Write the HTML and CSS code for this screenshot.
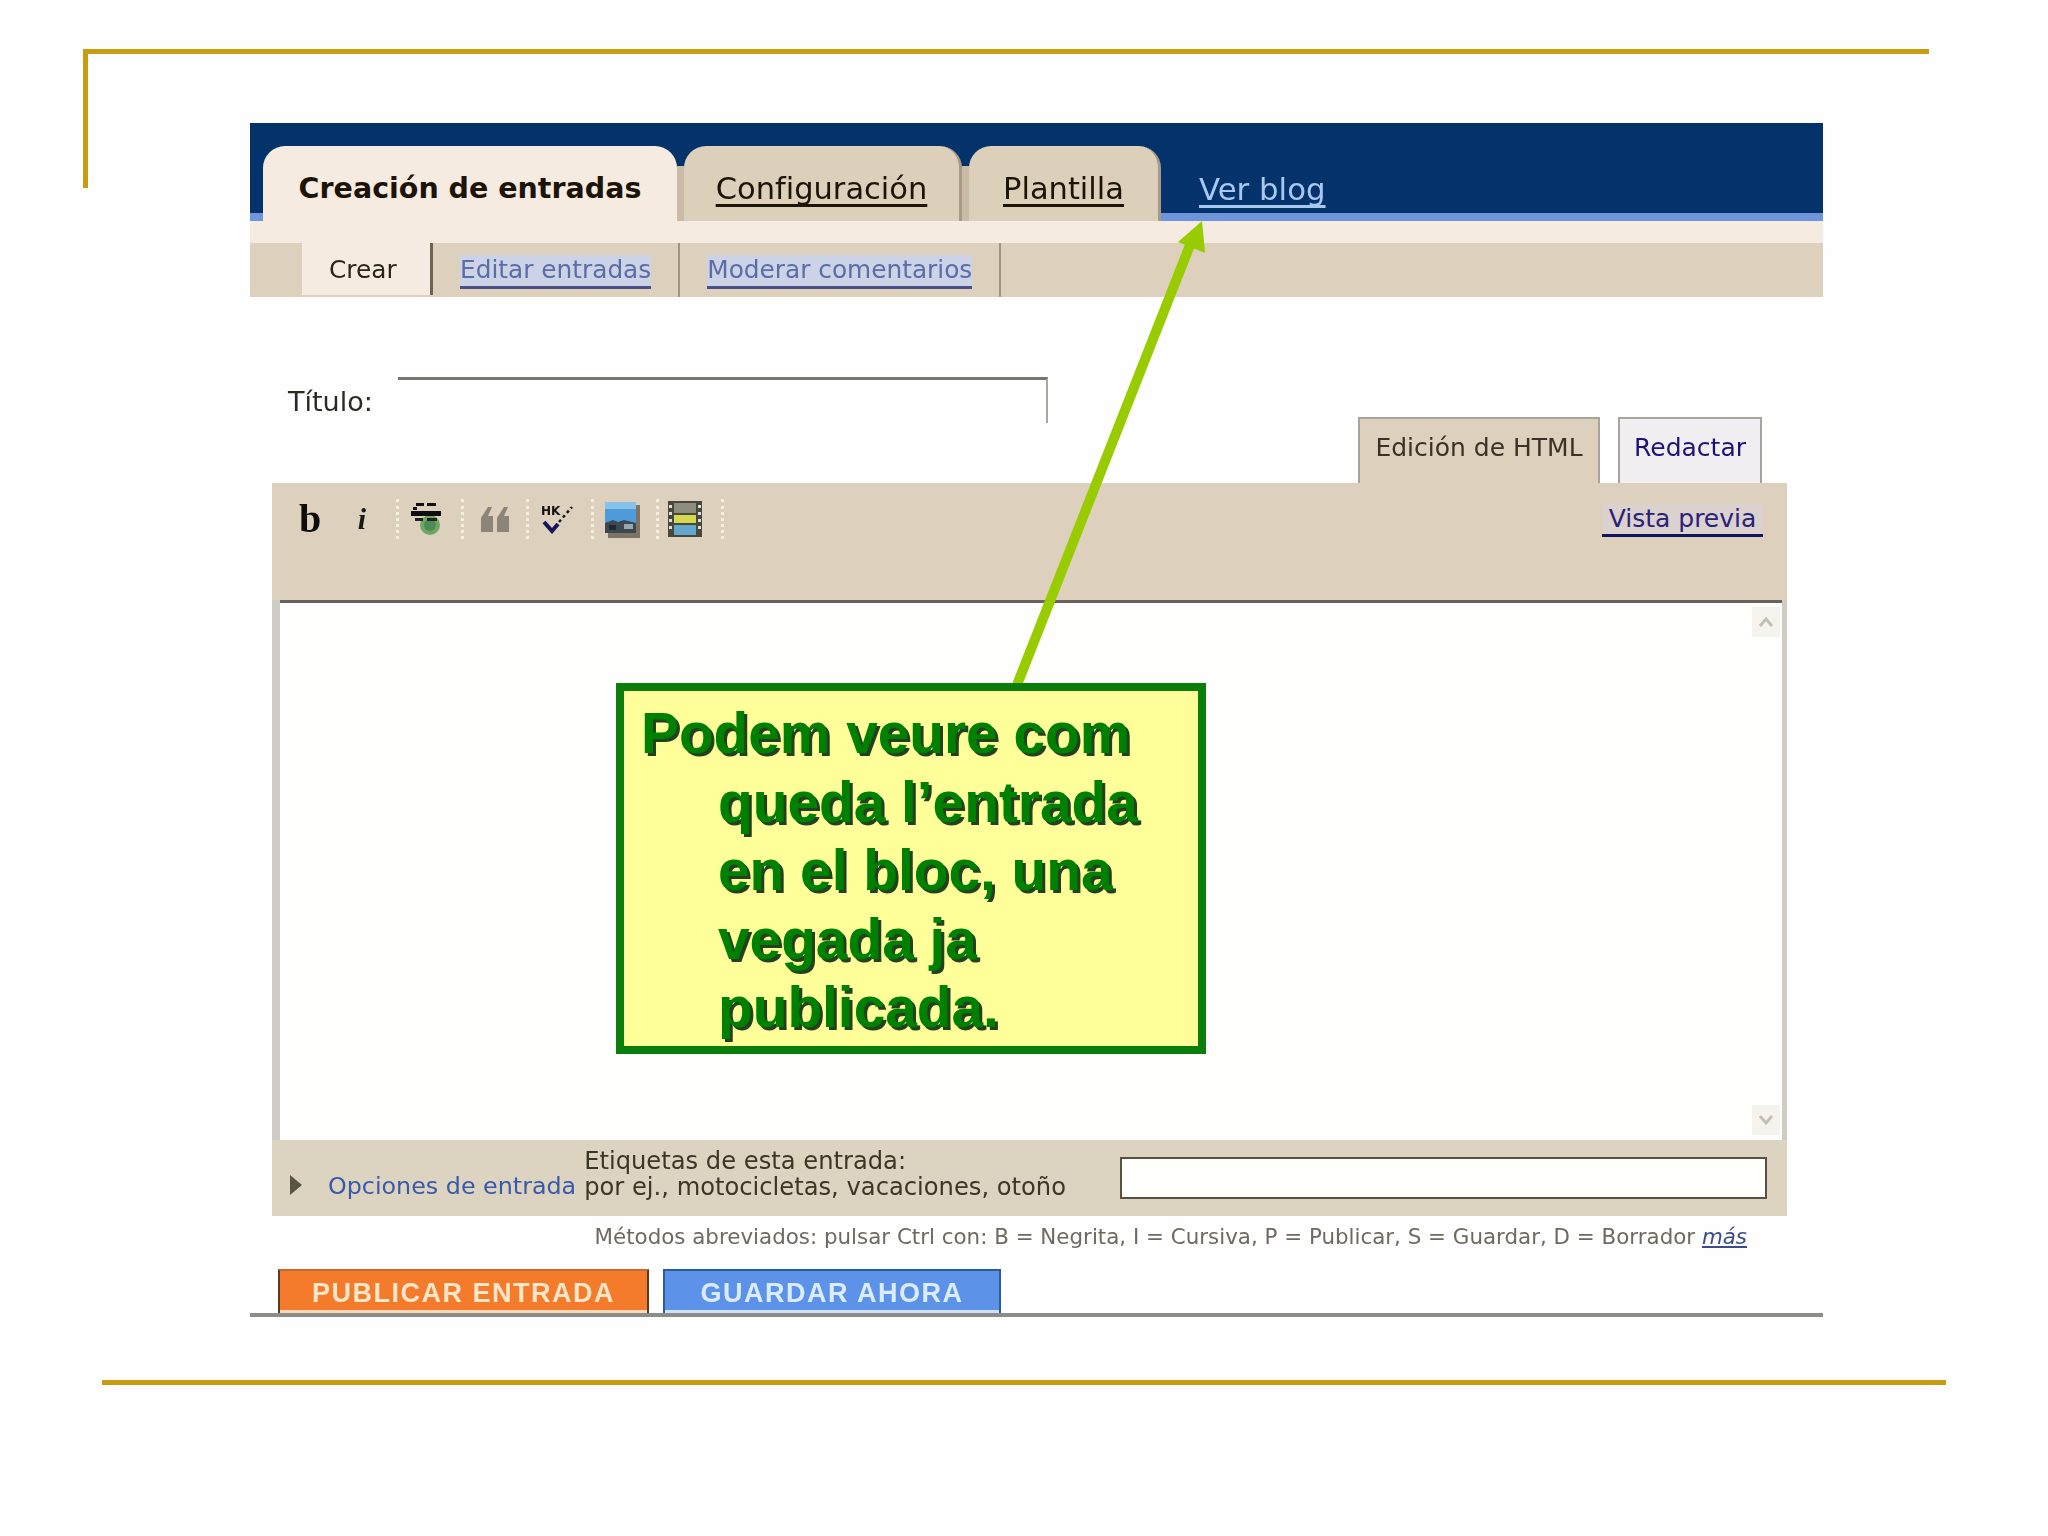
FILE: index.html
```html
<!DOCTYPE html>
<html lang="es">
<head>
    <meta charset="UTF-8">
    <title>Creación de entradas</title>
    <link rel="stylesheet" href="styles.css">
</head>
<body>
    <div class="slide">
        <div class="corner-rule"></div>

        <div class="shot">
            <!-- Top tabs -->
            <div class="top-nav">
                <a class="top-tab active">Creación de entradas</a>
                <a class="top-tab">Configuración</a>
                <a class="top-tab">Plantilla</a>
                <a class="top-link">Ver blog</a>
            </div>
            <div class="cream-strip"></div>
            <div class="sub-nav">
                <a class="sub-tab active">Crear</a>
                <a class="sub-tab"><span class="sub-link">Editar entradas</span></a>
                <a class="sub-tab"><span class="sub-link">Moderar comentarios</span></a>
            </div>

            <!-- Title and editor tabs -->
            <div class="form-head">
                <div class="title-row">
                    <label class="title-label">Título:</label>
                    <div class="title-input"></div>
                </div>
                <div class="mode-tabs">
                    <div class="mode-tab active">Edición de HTML</div>
                    <div class="mode-tab">Redactar</div>
                </div>
            </div>

            <!-- Editor -->
            <div class="editor">
                <div class="toolbar">
                    <div class="tool-group">
                        <span class="tool tool-b">b</span>
                        <span class="tool tool-i">i</span>
                        <span class="tool-sep"></span>
                        <span class="tool">
                            <svg width="36" height="34" viewBox="0 0 36 34">
                                <circle cx="21" cy="23" r="10" fill="#6ea664"/>
                                <circle cx="21" cy="23" r="6" fill="#4f8a50"/>
                                <rect x="7" y="1" width="8" height="3" fill="#111"/>
                                <rect x="18" y="1" width="9" height="3" fill="#111"/>
                                <rect x="4" y="5" width="4" height="3" fill="#111"/>
                                <rect x="2" y="9" width="30" height="5" fill="#0c0c0c"/>
                                <rect x="6" y="16" width="8" height="3" fill="#222"/>
                                <rect x="18" y="16" width="10" height="3" fill="#222"/>
                            </svg>
                        </span>
                        <span class="tool-sep"></span>
                        <span class="tool tool-quote">
                            <svg width="30" height="26" viewBox="0 0 30 26">
                                <path d="M1 26V12L8 1h4L8 10h5v16zM17 26V12L24 1h4l-4 9h5v16z" fill="#8c8479"/>
                            </svg>
                        </span>
                        <span class="tool-sep"></span>
                        <span class="tool">
                            <svg width="34" height="30" viewBox="0 0 34 30">
                                <text x="1" y="11" class="spell-text">HK</text>
                                <path d="M4 18l8 9 6-7" fill="none" stroke="#14145a" stroke-width="4"/>
                                <path d="M19 18L32 3" fill="none" stroke="#1a1a1a" stroke-width="2.5" stroke-dasharray="3 3"/>
                            </svg>
                        </span>
                        <span class="tool-sep"></span>
                        <span class="tool">
                            <svg width="36" height="37" viewBox="0 0 36 37">
                                <rect x="4" y="4" width="32" height="33" fill="#7d7466"/>
                                <rect x="1" y="1" width="31" height="31" fill="#4f9ad8"/>
                                <rect x="1" y="1" width="31" height="7" fill="#86c2ea"/>
                                <path d="M1 32V22l8-3 5 2 6-2 12 3v10z" fill="#3c4750"/>
                                <rect x="20" y="23" width="9" height="5" fill="#9aa6ae"/>
                                <rect x="5" y="24" width="7" height="5" fill="#1f2a30"/>
                            </svg>
                        </span>
                        <span class="tool-sep"></span>
                        <span class="tool tool-film">
                            <svg width="34" height="36" viewBox="0 0 34 36">
                                <rect width="34" height="36" fill="#46483c"/>
                                <rect x="6" y="2" width="22" height="10" fill="#8e8e80"/>
                                <rect x="6" y="14" width="22" height="8" fill="#d8d84e"/>
                                <rect x="6" y="24" width="22" height="10" fill="#62a6cc"/>
                                <rect x="1" y="4" width="3" height="3" fill="#ddd"/>
                                <rect x="1" y="11" width="3" height="3" fill="#ddd"/>
                                <rect x="1" y="18" width="3" height="3" fill="#ddd"/>
                                <rect x="1" y="25" width="3" height="3" fill="#ddd"/>
                                <rect x="30" y="4" width="3" height="3" fill="#ddd"/>
                                <rect x="30" y="11" width="3" height="3" fill="#ddd"/>
                                <rect x="30" y="18" width="3" height="3" fill="#ddd"/>
                                <rect x="30" y="25" width="3" height="3" fill="#ddd"/>
                            </svg>
                        </span>
                        <span class="tool-sep"></span>
                    </div>
                    <a class="preview-link">Vista previa</a>
                </div>

                <div class="text-frame">
                    <div class="text-area">
                        <div class="scroll-col">
                            <div class="scroll-btn">
                                <svg width="16" height="12" viewBox="0 0 16 12"><path d="M2 10l6-7 6 7" fill="none" stroke="#c4c0b6" stroke-width="3"/></svg>
                            </div>
                            <div class="scroll-btn">
                                <svg width="16" height="12" viewBox="0 0 16 12"><path d="M2 2l6 7 6-7" fill="none" stroke="#c4c0b6" stroke-width="3"/></svg>
                            </div>
                        </div>
                    </div>
                </div>

                <div class="options-bar">
                    <span class="options-arrow"></span>
                    <a class="options-link">Opciones de entrada</a>
                    <div class="labels-hint">
                        <div>Etiquetas de esta entrada:</div>
                        <div>por ej., motocicletas, vacaciones, otoño</div>
                    </div>
                    <div class="labels-input"></div>
                </div>
            </div>

            <div class="shortcuts">Métodos abreviados: pulsar Ctrl con: B = Negrita, I = Cursiva, P = Publicar, S = Guardar, D = Borrador <a class="more-link">más</a></div>

            <div class="actions">
                <div class="btn btn-publish">PUBLICAR ENTRADA</div>
                <div class="btn btn-save">GUARDAR AHORA</div>
            </div>
        </div>

        <div class="bottom-rule"></div>

        <!-- Arrow and callout sit on top of the screenshot -->
        <svg class="arrow" width="2048" height="1536" viewBox="0 0 2048 1536">
            <line x1="1015" y1="690" x2="1192" y2="240" stroke="#99cc00" stroke-width="10"/>
            <polygon points="1202,221 1178,242 1205,253" fill="#99cc00"/>
        </svg>
        <div class="callout">
            Podem veure com<br>queda l’entrada<br>en el bloc, una<br>vegada ja<br>publicada.
        </div>
    </div>
</body>
</html>
```

FILE: styles.css
```css
body, html {
    margin: 0;
    padding: 0;
    background-color: #fefefe;
    font-family: "DejaVu Sans", Verdana, sans-serif;
}

.slide {
    position: relative;
    width: 2048px;
    height: 1536px;
    padding-top: 123px;
    box-sizing: border-box;
    overflow: hidden;
}

.corner-rule {
    position: absolute;
    left: 83px;
    top: 49px;
    width: 1846px;
    height: 139px;
    box-sizing: border-box;
    border-top: 5px solid #c99c12;
    border-left: 5px solid #c99c12;
}

.shot {
    width: 1573px;
    margin-left: 250px;
    filter: blur(0.6px); /* the source picture is a soft upscale */
}

/* Top tabs */
.top-nav {
    height: 98px;
    box-sizing: border-box;
    padding-left: 13px;
    display: flex;
    align-items: flex-end;
    gap: 7px;
    background-color: #04336c;
    box-shadow: inset 0 -8px 0 #6f94dc;
}

.top-tab {
    position: relative;
    height: 75px;
    box-sizing: border-box;
    padding-top: 25px;
    text-align: center;
    font-size: 30.5px;
    line-height: 36px;
    color: #1c1408;
    text-decoration: underline;
    text-decoration-skip-ink: none;
    text-underline-offset: 5px;
    background-color: #ddd0bb;
    border-radius: 22px 22px 0 0;
    border-right: 3px solid #a89a86;
}

/* the gap between two tabs is filled below the notch */
.top-tab::after {
    content: "";
    position: absolute;
    right: -10px;
    bottom: 0;
    width: 7px;
    height: 55px;
    background-color: #c9bba6;
}

.top-tab:nth-child(1) {
    width: 414px;
    border-right: none;
    font-size: 28.5px;
    font-weight: bold;
    text-decoration: none;
    background-color: #f6ebe0;
}

.top-tab:nth-child(1)::after {
    right: -7px;
}

.top-tab:nth-child(2) {
    width: 278px;
}

.top-tab:nth-child(3) {
    width: 192px;
}

.top-tab:nth-child(3)::after {
    display: none;
}

.top-link {
    margin-left: 31px;
    height: 75px;
    padding-top: 25px;
    box-sizing: border-box;
    font-size: 30.8px;
    line-height: 36px;
    color: #a9c8f0;
    text-decoration: underline;
    text-decoration-skip-ink: none;
    text-underline-offset: 5px;
}

.cream-strip {
    height: 22px;
    background-color: #f6ebe0;
}

.sub-nav {
    height: 54px;
    padding-left: 52px;
    display: flex;
    background-color: #ddd0bc;
}

.sub-tab {
    box-sizing: border-box;
    height: 54px;
    padding: 12px 27px 0 27px;
    font-size: 24.8px;
    line-height: 30px;
    border-right: 2px solid #a39480;
}

.sub-tab.active {
    width: 131px;
    height: 52px;
    color: #2a2418;
    background-color: #f6ebe0;
    border-right: 3px solid #6e6250;
}

.sub-link {
    color: #5b6da6;
    background-color: #ccd3e6;
    border-bottom: 3px solid #4a4f88;
    padding-bottom: 2px;
}

/* Title and editor tabs */
.form-head {
    height: 186px;
    box-sizing: border-box;
    padding: 80px 61px 0 38px;
    display: flex;
    justify-content: space-between;
}

.title-row {
    display: flex;
    gap: 25px;
    height: 46px;
}

.title-label {
    width: 85px;
    padding-top: 11px;
    font-size: 27px;
    line-height: 28px;
    color: #2a2a22;
}

.title-input {
    width: 650px;
    box-sizing: border-box;
    border-top: 3px solid #76766e;
    border-right: 2px solid #a8a8a0;
}

.mode-tabs {
    align-self: flex-end;
    display: flex;
    gap: 18px;
}

.mode-tab {
    height: 66px;
    box-sizing: border-box;
    padding: 13px 0 0 0;
    text-align: center;
    width: 144px;
    font-size: 25px;
    line-height: 32px;
    color: #1c1470;
    background-color: #f1eef2;
    border: 2px solid #a7a49c;
    border-bottom: none;
}

.mode-tab.active {
    width: 242px;
    color: #3a3226;
    background-color: #ddd0bc;
}

/* Editor */
.editor {
    margin-left: 22px;
    width: 1515px;
}

.toolbar {
    height: 117px;
    box-sizing: border-box;
    padding: 17px 24px 0 12px;
    display: flex;
    justify-content: space-between;
    align-items: flex-start;
    background-color: #ddd0bc;
}

.tool-group {
    display: flex;
    align-items: center;
    height: 38px;
}

.tool {
    width: 62px;
    box-sizing: border-box;
    padding-right: 6px;
    display: flex;
    justify-content: center;
    align-items: center;
}

.tool-quote {
    padding-right: 0;
}

.tool-film {
    padding-right: 10px;
}

.tool-b {
    width: 52px;
    padding-right: 0;
    font-family: "Liberation Serif", serif;
    font-size: 40px;
    font-weight: bold;
    line-height: 38px;
    color: #0c0c0c;
}

.tool-i {
    width: 52px;
    padding-right: 0;
    margin-right: 8px;
    font-family: "Liberation Serif", serif;
    font-size: 30px;
    font-weight: bold;
    font-style: italic;
    line-height: 38px;
    color: #181818;
}

.tool-sep {
    width: 0;
    height: 40px;
    border-left: 3px dotted #f6eedc;
}

.spell-text {
    font-family: "DejaVu Sans", sans-serif;
    font-size: 12px;
    font-weight: bold;
    fill: #111;
}

.preview-link {
    width: 161px;
    box-sizing: border-box;
    margin-top: 4px;
    text-align: center;
    font-size: 25px;
    line-height: 30px;
    white-space: nowrap;
    color: #2a2278;
    border-bottom: 3px solid #14145a;
    background-color: #dbd1cf;
}

.text-frame {
    padding: 0 5px 0 8px;
    background-color: #cfccc6;
}

.text-area {
    height: 540px;
    box-sizing: border-box;
    padding: 4px 2px 5px 0;
    display: flex;
    justify-content: flex-end;
    background-color: #fefefc;
    border-top: 3px solid #66645c;
}

.scroll-col {
    width: 28px;
    display: flex;
    flex-direction: column;
    justify-content: space-between;
}

.scroll-btn {
    height: 30px;
    display: flex;
    justify-content: center;
    align-items: center;
    background-color: #f5f3ee;
}

.options-bar {
    height: 76px;
    box-sizing: border-box;
    padding: 8px 20px 0 18px;
    display: flex;
    background-color: #dcd3c0;
}

.options-arrow {
    width: 0;
    height: 0;
    margin-top: 27px;
    border-left: 12px solid #5a5444;
    border-top: 10px solid transparent;
    border-bottom: 10px solid transparent;
}

.options-link {
    margin: 23px 0 0 26px;
    font-size: 23.8px;
    line-height: 30px;
    color: #3a5aa8;
    white-space: nowrap;
}

.labels-hint {
    width: 536px;
    margin-left: 8px;
    font-size: 24.2px;
    line-height: 26px;
    color: #3c3628;
    white-space: nowrap;
}

.labels-input {
    width: 647px;
    height: 42px;
    margin-top: 9px;
    box-sizing: border-box;
    background-color: #fffffc;
    border: 2px solid #5a5040;
}

.shortcuts {
    height: 53px;
    box-sizing: border-box;
    padding: 8px 76px 0 0;
    text-align: right;
    font-size: 21.4px;
    line-height: 26px;
    color: #6e6a62;
    white-space: nowrap;
}

.more-link {
    color: #3c4c88;
    font-style: italic;
    text-decoration: underline;
}

/* Buttons */
.actions {
    height: 48px;
    box-sizing: border-box;
    padding-left: 28px;
    display: flex;
    gap: 14px;
    border-bottom: 4px solid #8c8c88;
}

.btn {
    height: 44px;
    box-sizing: border-box;
    text-align: center;
    padding-top: 5px;
    font-family: "Liberation Sans", Arial, sans-serif;
    font-size: 27px;
    font-weight: bold;
    line-height: 34px;
    letter-spacing: 1.5px;
    border-left: 2px solid #5a3a20;
    border-right: 2px solid #5a3a20;
    border-top: 2px solid #c86a30;
}

.btn-publish {
    width: 371px;
    color: #fbe6c8;
    background-color: #f47b2c;
    box-shadow: inset 0 -3px 0 #fcd9b8;
}

.btn-save {
    width: 338px;
    color: #dcecff;
    background-color: #5c93e8;
    border-color: #2a5aa0;
    box-shadow: inset 0 -3px 0 #cfe2ff;
}

.bottom-rule {
    width: 1844px;
    height: 5px;
    margin: 63px 0 0 102px;
    background-color: #c99c12;
}

/* Overlays */
.arrow {
    position: absolute;
    left: 0;
    top: 0;
    pointer-events: none;
}

.callout {
    position: absolute;
    left: 616px;
    top: 683px;
    width: 590px;
    height: 371px;
    box-sizing: border-box;
    padding: 9px 0 0 94px;
    text-indent: -77px;
    font-family: "Liberation Sans", Arial, sans-serif;
    font-size: 56.8px;
    font-weight: bold;
    line-height: 68.5px;
    color: #008000;
    text-shadow: 3px 3px 0 #23401f;
    background-color: #ffff99;
    border: 8px solid #0a7d0a;
}
```
